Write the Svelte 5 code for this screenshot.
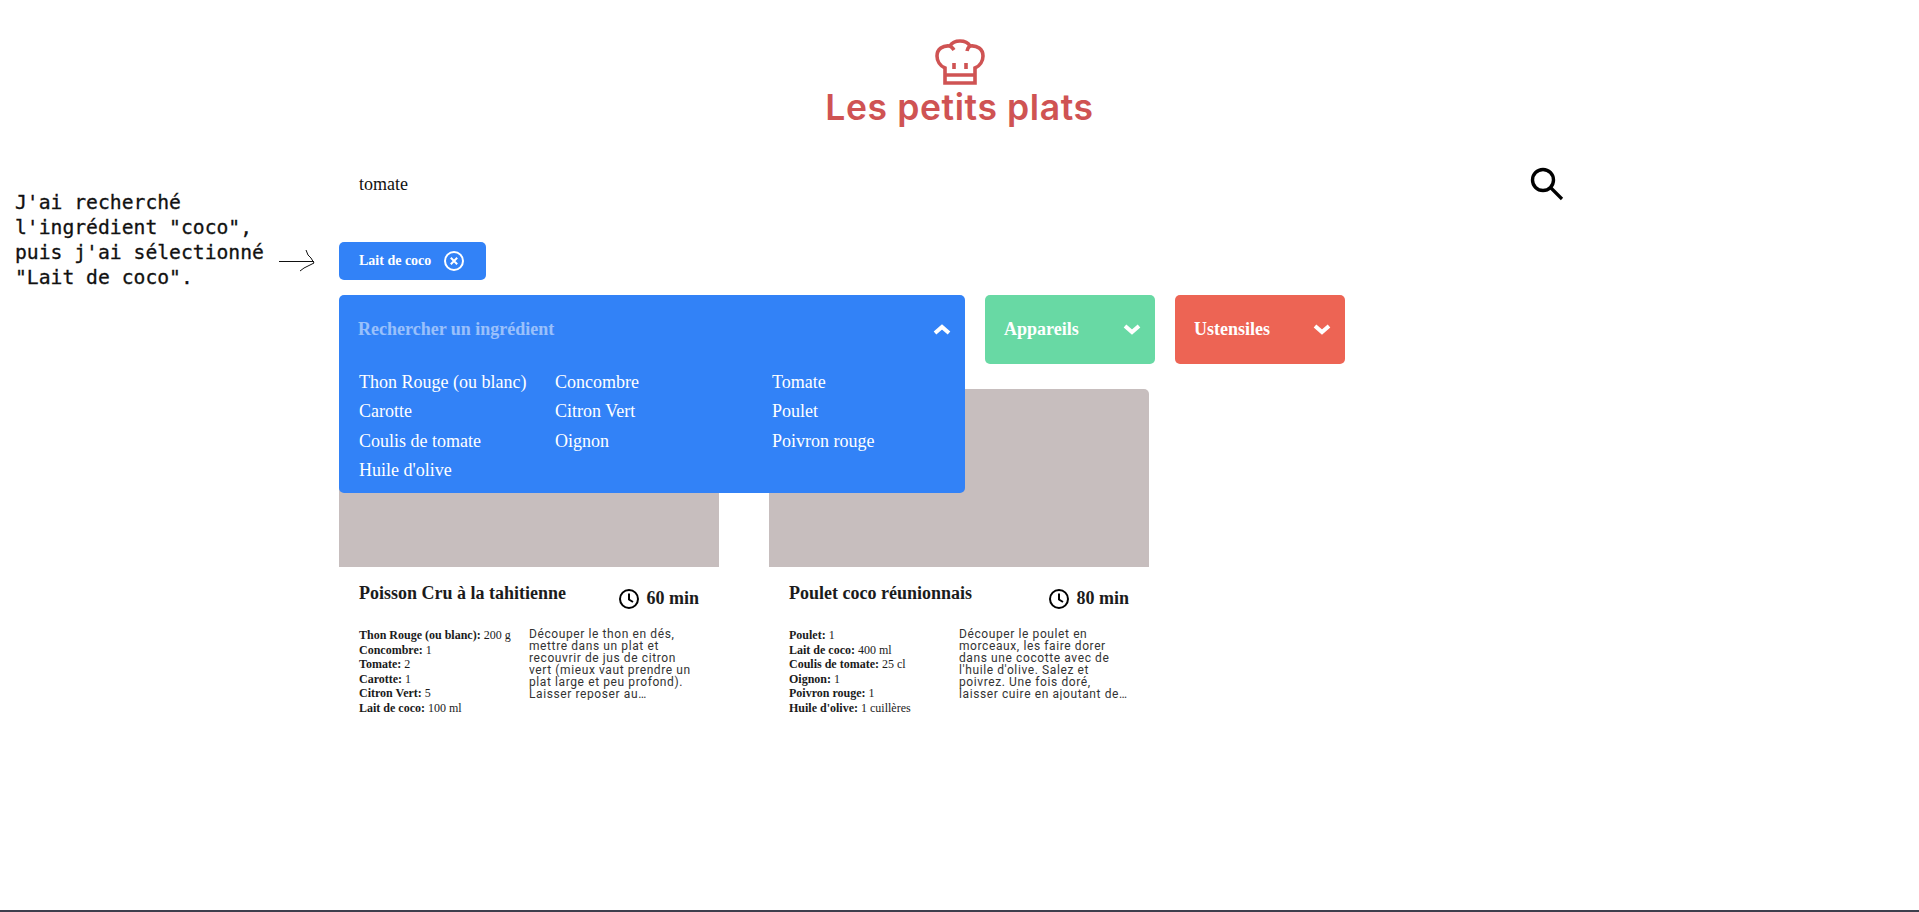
<script>
	let recipes = [
		{
			title: 'Poisson Cru à la tahitienne',
			time: 60,
			ingredients: [
				['Thon Rouge (ou blanc)', '200 g'],
				['Concombre', '1'],
				['Tomate', '2'],
				['Carotte', '1'],
				['Citron Vert', '5'],
				['Lait de coco', '100 ml']
			],
			description:
				'Découper le thon en dés, mettre dans un plat et recouvrir de jus de citron vert (mieux vaut prendre un plat large et peu profond). Laisser reposer au réfrigérateur au moins 2 heures.'
		},
		{
			title: 'Poulet coco réunionnais',
			time: 80,
			ingredients: [
				['Poulet', '1'],
				['Lait de coco', '400 ml'],
				['Coulis de tomate', '25 cl'],
				['Oignon', '1'],
				['Poivron rouge', '1'],
				["Huile d'olive", '1 cuillères']
			],
			description:
				"Découper le poulet en morceaux, les faire dorer dans une cocotte avec de l'huile d'olive. Salez et poivrez. Une fois doré, laisser cuire en ajoutant de l'eau."
		}
	];

	let options = [
		'Thon Rouge (ou blanc)', 'Concombre', 'Tomate',
		'Carotte', 'Citron Vert', 'Poulet',
		'Coulis de tomate', 'Oignon', 'Poivron rouge',
		"Huile d'olive"
	];
</script>

<div class="page">
	<!-- note laid over the left margin of the page -->
	<p class="note">J'ai recherché<br />l'ingrédient "coco",<br />puis j'ai sélectionné<br />"Lait de coco".</p>
	<svg class="arrow" width="38" height="24" viewBox="0 0 38 24" fill="none" stroke="#111" stroke-width="1">
		<path d="M0 12.500 H35 M27 1 L29 6 L32 9 L35 14 L31 16 L25 19 L21 22" />
	</svg>

	<header class="brand">
		<svg width="50" height="46" viewBox="0 0 50 46" fill="none" stroke="#cf5353" stroke-width="3.600">
			<path d="M10 44 V29 C5 27 2 22 2 17 C2 10 8 6 15 7 C17 3.500 21 2 25 2 C29 2 33 3.500 35 7 C42 6 48 10 48 17 C48 22 45 27 40 29 V44 Z" />
			<path d="M10 36 H40 M19 24 V30 M31 24 V30" />
			<path d="M15 7 C16.500 8 18 9.500 19 11 M35 7 C33.500 8 32.500 9.500 32 12" />
		</svg>
		<h1>Les petits plats</h1>
	</header>

	<main class="container">
		<div class="search">
			<span class="query">tomate</span>
			<svg width="36" height="36" viewBox="0 0 36 36" fill="none" stroke="#000">
				<circle cx="13" cy="13" r="10.500" stroke-width="3.400" />
				<path d="M21 21 L32 32" stroke-width="3.200" />
			</svg>
		</div>

		<div class="tags">
			<span class="tag">
				Lait de coco
				<svg width="20" height="20" viewBox="0 0 20 20" fill="none" stroke="#fff" stroke-width="2">
					<circle cx="10" cy="10" r="9" />
					<path d="M6.800 6.800 L13.200 13.200 M13.200 6.800 L6.800 13.200" />
				</svg>
			</span>
		</div>

		<div class="filters">
			<div class="filter open blue">
				<div class="filter-head">
					<span class="placeholder">Rechercher un ingrédient</span>
					<svg class="chevron" width="18" height="11" viewBox="0 0 18 11" fill="none" stroke="#fff" stroke-width="4">
						<path d="M2 9 L9 3 L16 9" />
					</svg>
				</div>
				<ul class="options">
					{#each options as option}
						<li>{option}</li>
					{/each}
				</ul>
			</div>
			<div class="filter green">
				<div class="filter-head">
					<span>Appareils</span>
					<svg class="chevron" width="18" height="11" viewBox="0 0 18 11" fill="none" stroke="#fff" stroke-width="4">
						<path d="M2 2 L9 8 L16 2" />
					</svg>
				</div>
			</div>
			<div class="filter red">
				<div class="filter-head">
					<span>Ustensiles</span>
					<svg class="chevron" width="18" height="11" viewBox="0 0 18 11" fill="none" stroke="#fff" stroke-width="4">
						<path d="M2 2 L9 8 L16 2" />
					</svg>
				</div>
			</div>
		</div>

		<section class="cards">
			{#each recipes as recipe}
				<article class="card">
					<div class="image"></div>
					<div class="body">
						<div class="card-head">
							<h2>{recipe.title}</h2>
							<span class="time">
								<svg width="20" height="20" viewBox="0 0 20 20" fill="none" stroke="#000" stroke-width="2">
									<circle cx="10" cy="10" r="9" />
									<path d="M10 4.500 V10.500 L14 13" />
								</svg>
								{recipe.time} min
							</span>
						</div>
						<div class="card-text">
							<ul class="ingredients">
								{#each recipe.ingredients as [name, quantity]}
									<li><strong>{name}:</strong> {quantity}</li>
								{/each}
							</ul>
							<p class="description">{recipe.description}</p>
						</div>
					</div>
				</article>
			{/each}
		</section>
	</main>
</div>

<style>
	:global(body) {
		background: #fff;
	}

	.page {
		position: relative;
		min-height: 910px;
		border-bottom: 2px solid #3d3f4d;
		font-family: "Liberation Serif", serif;
		color: #1b1b1b;
	}

	.note {
		position: absolute;
		left: 15px;
		top: 190px;
		margin: 0;
		font-family: "DejaVu Sans Mono", monospace;
		font-size: 19.7px;
		line-height: 25px;
		color: #111;
		-webkit-text-stroke: 0.3px #111;
	}

	.arrow {
		position: absolute;
		left: 279px;
		top: 249px;
	}

	.brand {
		display: flex;
		flex-direction: column;
		align-items: center;
		padding-top: 39px;
	}

	.brand svg {
		display: block;
	}

	.brand h1 {
		margin: 0;
		font-family: "Inter", sans-serif;
		font-size: 35.5px;
		line-height: 46px;
		font-weight: 600;
		letter-spacing: 0.6px;
		color: #cf5353;
	}

	.container {
		width: 1241px;
		margin: 0 auto;
	}

	.search {
		display: flex;
		align-items: center;
		justify-content: space-between;
		height: 69px;
		margin-top: 19px;
		padding: 0 14px 0 20px;
		font-size: 18px;
		color: #111;
	}

	.tags {
		display: flex;
		margin-top: 23px;
	}

	.tag {
		display: flex;
		align-items: center;
		gap: 13px;
		height: 38px;
		padding: 0 22px 0 20px;
		border-radius: 5px;
		background: #3282f7;
		color: #fff;
		font-size: 14px;
		font-weight: 700;
	}

	.filters {
		display: flex;
		align-items: flex-start;
		gap: 20px;
		height: 69px;
		margin-top: 15px;
		margin-bottom: 25px;
	}

	.filter {
		position: relative;
		z-index: 1;
		width: 170px;
		border-radius: 5px;
		color: #fff;
		font-size: 18px;
		font-weight: 700;
	}

	.filter.open {
		width: 626px;
	}

	.blue {
		background: #3282f7;
	}

	.green {
		background: #68d9a4;
	}

	.red {
		background: #ed6454;
	}

	.filter-head {
		display: flex;
		align-items: center;
		justify-content: space-between;
		height: 68px;
		padding: 0 14px 1px 19px;
	}

	.placeholder {
		opacity: 0.5;
	}

	.options {
		display: grid;
		grid-template-columns: 196px 217px 1fr;
		grid-auto-rows: 29.4px;
		margin: 0;
		padding: 4px 20px 7px;
		list-style: none;
		font-weight: 400;
		line-height: 29.4px;
	}

	.cards {
		display: flex;
		gap: 50px;
	}

	.card {
		width: 380px;
	}

	.image {
		height: 178px;
		border-radius: 5px 5px 0 0;
		background: #c7bebe;
	}

	.body {
		padding: 16px 20px 0;
	}

	.card-head {
		display: flex;
		justify-content: space-between;
		align-items: flex-start;
	}

	h2 {
		margin: 0;
		font-size: 18px;
		line-height: 21px;
		font-weight: 700;
	}

	.time {
		display: flex;
		align-items: center;
		gap: 7px;
		margin-top: 5px;
		font-size: 18px;
		line-height: 21px;
		font-weight: 700;
	}

	.card-text {
		display: grid;
		grid-template-columns: 170px 170px;
		align-items: start;
		margin-top: 19px;
	}

	.ingredients {
		margin: 0;
		padding: 0;
		list-style: none;
		font-size: 12px;
		line-height: 14.5px;
	}

	.description {
		display: -webkit-box;
		-webkit-box-orient: vertical;
		-webkit-line-clamp: 6;
		line-clamp: 6;
		overflow: hidden;
		margin: 0;
		font-family: "Roboto", sans-serif;
		font-size: 12px;
		line-height: 12px;
		letter-spacing: 0.6px;
		color: #333;
	}
</style>
